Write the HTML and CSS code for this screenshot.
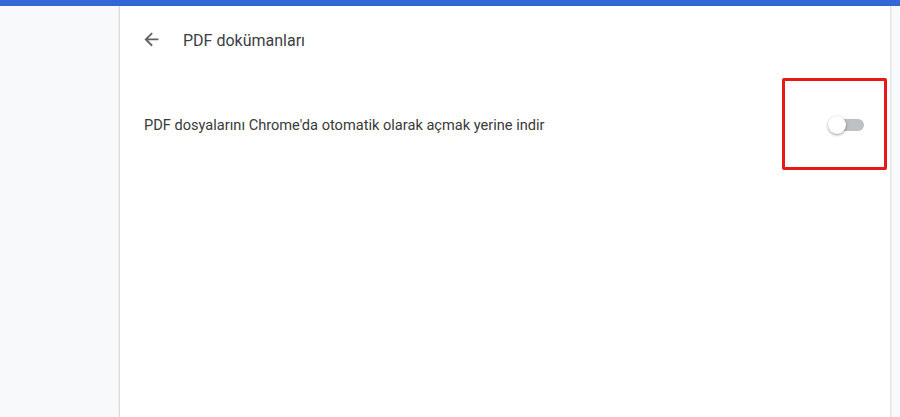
FILE: index.html
```html
<!DOCTYPE html>
<html lang="tr">
<head>
  <meta charset="UTF-8" />
  <meta name="viewport" content="width=device-width, initial-scale=1.0"/>
  <title>Ayarlar - PDF dokümanları</title>
  <link rel="stylesheet" href="styles.css">
</head>
<body>
  <div class="topbar"></div>
  <div class="layout">
    <div class="sidebar"></div>
    <div class="card">
      <div class="subpage-header">
        <button class="back-btn" aria-label="Geri">
          <svg width="16" height="16" viewBox="0 0 16 16">
            <path d="M15 7H3.8l5.1-5.1L7.5.5 0 8l7.5 7.5 1.4-1.4L3.8 9H15z" fill="#5f6368" transform="translate(0.5 0) scale(0.93)"/>
          </svg>
        </button>
        <h1 class="subpage-title">PDF dokümanları</h1>
      </div>

      <div class="setting-row">
        <div class="setting-label">PDF dosyalarını Chrome'da otomatik olarak açmak yerine indir</div>
        <div class="toggle">
          <span class="toggle-bar"></span>
          <span class="toggle-knob"></span>
        </div>
      </div>

      <div class="highlight"></div>
    </div>
    <div class="gutter"></div>
  </div>
</body>
</html>
```

FILE: styles.css
```css
html, body {
  height: 100%;
}
body {
  margin: 0;
  background-color: #f8f9fa;
  font-family: Roboto, 'Liberation Sans', sans-serif;
  color: #333;
  overflow: hidden;
}
.topbar {
  height: 6px;
  background-color: #3367d6;
}
.layout {
  display: flex;
  height: calc(100% - 6px);
}
.sidebar {
  width: 119px;
  flex-shrink: 0;
}
.card {
  position: relative;
  width: 772px;
  flex-shrink: 0;
  background: #fff;
  border-left: 1px solid #dcdcdc;
  border-right: 1px solid #e3e3e3;
  box-sizing: border-box;
  box-shadow: 0 0 2px rgba(60, 64, 67, 0.15);
  padding-top: 6px;
}
.gutter {
  flex: 1;
}
.subpage-header {
  display: flex;
  align-items: center;
  height: 56px;
  padding-left: 24px;
}
.back-btn {
  width: 16px;
  height: 16px;
  padding: 0;
  border: none;
  background: none;
  cursor: pointer;
  display: flex;
}
.subpage-title {
  margin: 0 0 0 23px;
  font-size: 16px;
  font-weight: 400;
  color: #3c4043;
}
.setting-row {
  display: flex;
  align-items: center;
  justify-content: space-between;
  height: 48px;
  margin-top: 33px;
  padding: 0 26px 0 24px;
}
.setting-label {
  font-size: 14.6px;
  color: #3a3a3a;
}
.toggle {
  position: relative;
  width: 36px;
  height: 18px;
}
.toggle-bar {
  position: absolute;
  right: 0;
  top: 3px;
  width: 26px;
  height: 12px;
  border-radius: 6px;
  background-color: #bdc1c6;
}
.toggle-knob {
  position: absolute;
  left: 0;
  top: 0;
  width: 18px;
  height: 18px;
  border-radius: 50%;
  background: #fff;
  box-shadow: 0 1px 3px rgba(0, 0, 0, 0.4);
}
.highlight {
  position: absolute;
  left: 662px;
  top: 72px;
  width: 105px;
  height: 92px;
  box-sizing: border-box;
  border: 3px solid #e81818;
  border-radius: 2px;
}
```
